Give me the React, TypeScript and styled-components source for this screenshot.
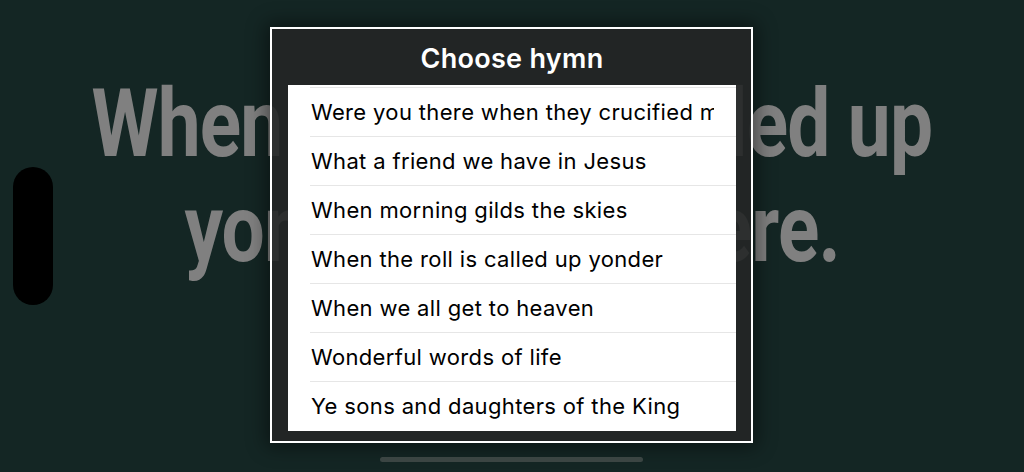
import React from "react";
import styled, { createGlobalStyle } from "styled-components";

const GlobalStyle = createGlobalStyle`
  html, body {
    margin: 0;
    padding: 0;
    background: #142624;
  }
  body {
    font-family: "Inter", "Noto Sans", sans-serif;
  }
`;

const Stage = styled.div`
  position: relative;
  width: 1024px;
  height: 472px;
  overflow: hidden;
  background: #142624;
`;

const Lyrics = styled.div`
  display: flex;
  flex-direction: column;
  align-items: center;
  padding-top: 72px;
`;

const LyricLine = styled.div`
  font-family: "Roboto", "Liberation Sans", sans-serif;
  font-weight: 700;
  font-size: 94px;
  line-height: 105px;
  color: #808080;
  white-space: nowrap;
  transform: scaleX(0.815);
  letter-spacing: -1px;
`;

const SidePill = styled.div`
  position: absolute;
  left: 13px;
  top: 167px;
  width: 40px;
  height: 138px;
  border-radius: 20px;
  background: #000;
`;

const HomeBar = styled.div`
  position: absolute;
  left: 380px;
  top: 457px;
  width: 263px;
  height: 5px;
  border-radius: 3px;
  background: #3b4543;
`;

const Dialog = styled.div`
  position: absolute;
  left: 270px;
  top: 27px;
  width: 448px;
  height: 402px;
  border: 2px solid #ffffff;
  background: rgba(36, 38, 38, 0.9);
  box-shadow: 0 0 18px 4px rgba(0, 0, 0, 0.45);
  display: flex;
  flex-direction: column;
  padding: 0 15px 10px 16px;
`;

const Title = styled.div`
  height: 56px;
  padding-top: 2px;
  box-sizing: border-box;
  display: flex;
  align-items: center;
  justify-content: center;
  color: #ffffff;
  font-family: "Inter", "Noto Sans", sans-serif;
  font-weight: 600;
  font-size: 27px;
  letter-spacing: 0.3px;
`;

const List = styled.div`
  background: #ffffff;
  height: 346px;
  padding-top: 2px;
  box-sizing: border-box;
  overflow: hidden;
`;

const Row = styled.div`
  position: relative;
  height: 49px;
  box-sizing: border-box;
  padding: 1px 22px 0 23px;
  display: flex;
  align-items: center;
  overflow: hidden;
  white-space: nowrap;
  font-family: "Inter", "Noto Sans", sans-serif;
  font-size: 22px;
  color: #000;
  letter-spacing: 0.35px;

  &::before {
    content: "";
    position: absolute;
    top: 0;
    left: 22px;
    right: 0;
    height: 1px;
    background: #e6e6e6;
  }
`;

const RowText = styled.span`
  display: block;
  overflow: hidden;
  text-overflow: clip;
  width: 100%;
`;

const hymns = [
  "Were you there when they crucified my Lord?",
  "What a friend we have in Jesus",
  "When morning gilds the skies",
  "When the roll is called up yonder",
  "When we all get to heaven",
  "Wonderful words of life",
  "Ye sons and daughters of the King",
];

export default function App() {
  return (
    <Stage>
      <GlobalStyle />
      <Lyrics>
        <LyricLine>When the roll is called up</LyricLine>
        <LyricLine>yonder, I’ll be there.</LyricLine>
      </Lyrics>
      <SidePill />
      <Dialog>
        <Title>Choose hymn</Title>
        <List>
          {hymns.map((h) => (
            <Row key={h}>
              <RowText>{h}</RowText>
            </Row>
          ))}
        </List>
      </Dialog>
      <HomeBar />
    </Stage>
  );
}
